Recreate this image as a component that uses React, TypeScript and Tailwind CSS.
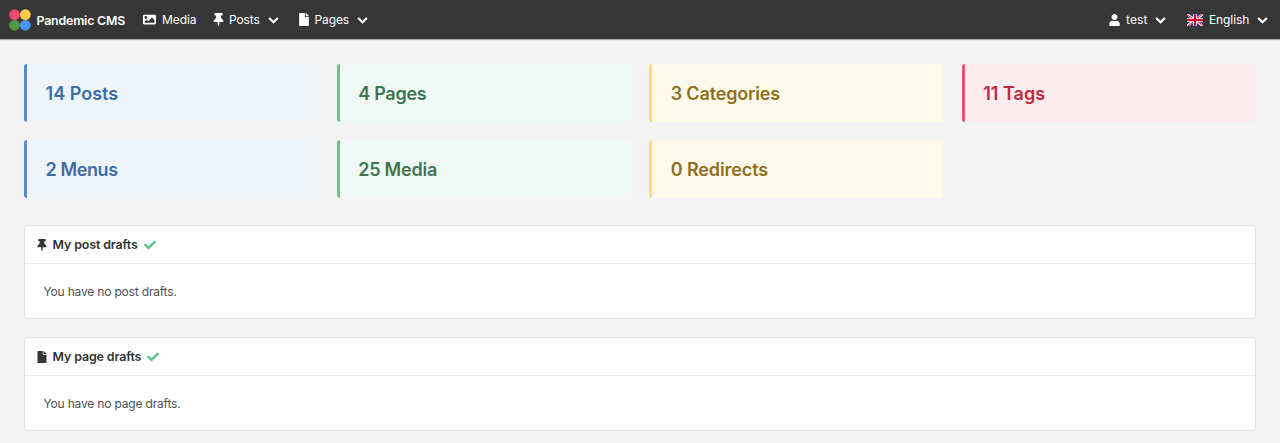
import type { ReactNode } from "react";
import { FaCheck, FaChevronDown, FaFile, FaImage, FaThumbtack, FaUser } from "react-icons/fa";

function Logo() {
  return (
    <svg className="h-[22px] w-[22px]" viewBox="0 0 22 22">
      <circle cx="5.6" cy="5.6" r="5.4" fill="#ec4a70" />
      <circle cx="16.3" cy="5.6" r="5.4" fill="#f8cb50" />
      <circle cx="5.6" cy="16.3" r="5.4" fill="#4f9a41" />
      <circle cx="16.3" cy="16.3" r="5.4" fill="#4597f7" />
    </svg>
  );
}

function Flag() {
  return (
    <svg className="mt-px h-3 w-4" viewBox="0 0 640 480" preserveAspectRatio="none">
      <path fill="#1d3a80" d="M0 0h640v480H0z" />
      <path fill="#fff" d="m75 0 244 181L562 0h78v62L400 241l240 178v61h-80L320 301 81 480H0v-60l239-178L0 64V0z" />
      <path fill="#c8102e" d="m424 281 216 159v40L369 281zm-184 20 6 35L54 480H0zM640 0v3L391 191l2-44L590 0zM0 0l239 176h-60L0 42z" />
      <path fill="#fff" d="M241 0v480h160V0zM0 160v160h640V160z" />
      <path fill="#c8102e" d="M0 193v96h640v-96zM273 0v480h96V0z" />
    </svg>
  );
}

type NavItemProps = { icon: ReactNode; label: string; className: string; menu?: boolean };

function NavItem({ icon, label, className, menu }: NavItemProps) {
  return (
    <a className={`flex items-center whitespace-nowrap ${className}`}>
      {icon}
      <span className="pt-px">{label}</span>
      {menu && <FaChevronDown className="mt-0.5 ml-auto h-[11px] w-[11px] stroke-white [stroke-width:24]" />}
    </a>
  );
}

const cards = [
  { label: "14 Posts", className: "border-[#548bd0] bg-[#eff4f9] text-[#3d6ca7] tracking-[0px]" },
  { label: "4 Pages", className: "border-[#6fc28e] bg-[#f0f9f5] text-[#3f7453] tracking-[-0.25px]" },
  { label: "3 Categories", className: "border-[#fbdd89] bg-[#fefaeb] text-[#8f6e20] tracking-[-0.15px]" },
  { label: "11 Tags", className: "border-[#e4546f] bg-[#fbecef] text-[#bd2b40] tracking-[0px]" },
  { label: "2 Menus", className: "border-[#548bd0] bg-[#eff4f9] text-[#3d6ca7] tracking-[-0.4px]" },
  { label: "25 Media", className: "border-[#6fc28e] bg-[#f0f9f5] text-[#3f7453] tracking-[-0.2px]" },
  { label: "0 Redirects", className: "border-[#fbdd89] bg-[#fefaeb] text-[#8f6e20] tracking-[-0.1px]" },
];

function Drafts({ icon, title, text }: { icon: ReactNode; title: string; text: string }) {
  return (
    <section className="h-[94px] rounded-[4px] border border-[#dfdfdf] bg-white">
      <header className="flex h-[38px] items-center border-b border-[#e9e9e9] pl-3">
        <span className="w-[15.5px]">{icon}</span>
        <h2 className="pt-0.5 text-[12.4px] font-semibold tracking-[-0.1px] text-[#333]">{title}</h2>
        <FaCheck className="ml-1.5 h-3 w-3 text-[#62c48d]" />
      </header>
      <p className="flex h-[54px] items-center pt-px pl-[18.5px] text-[12px] tracking-[-0.18px] text-[#505050]">{text}</p>
    </section>
  );
}

export default function App() {
  return (
    <div className="min-h-[443px] bg-[#f4f4f4] font-['Inter','Liberation_Sans',sans-serif]">
      <nav className="flex h-[39px] items-center bg-[#363636] pr-3 pl-[9px] text-[12px] tracking-[-0.1px] text-white shadow-[0_1px_1px_#aaa]">
        <Logo />
        <span className="ml-[5.5px] w-[106.5px] pt-[3px] text-[12.4px] font-semibold tracking-[-0.2px] whitespace-nowrap">Pandemic CMS</span>
        <NavItem icon={<FaImage className="mr-[6px] h-[13px] w-[13px]" />} label="Media" className="w-[70px]" />
        <NavItem icon={<FaThumbtack className="mr-[5px] h-[13px] w-[11px]" />} label="Posts" className="w-[65.5px]" menu />
        <NavItem icon={<FaFile className="mr-[6px] h-[13px] w-[10px]" />} label="Pages" className="ml-5 w-[69px]" menu />
        <NavItem icon={<FaUser className="mr-[6px] h-3 w-[11px]" />} label="test" className="ml-auto w-[57px] tracking-[0.1px]" menu />
        <NavItem icon={<span className="mr-1.5"><Flag /></span>} label="English" className="ml-[21px] w-[81px]" menu />
      </nav>
      <main className="px-6 pt-[25px]">
        <div className="grid grid-cols-4 gap-[18.2px]">
          {cards.map((card) => (
            <div
              key={card.label}
              className={`flex h-[58px] items-center rounded-[3px] border-l-[3px] pl-[18.6px] text-[18px] font-semibold ${card.className}`}
            >
              {card.label}
            </div>
          ))}
        </div>
        <div className="mt-[27px] flex flex-col gap-[18px]">
          <Drafts icon={<FaThumbtack className="h-3 w-[10px] text-[#363636]" />} title="My post drafts" text="You have no post drafts." />
          <Drafts icon={<FaFile className="h-3 w-[10px] text-[#363636]" />} title="My page drafts" text="You have no page drafts." />
        </div>
      </main>
    </div>
  );
}
